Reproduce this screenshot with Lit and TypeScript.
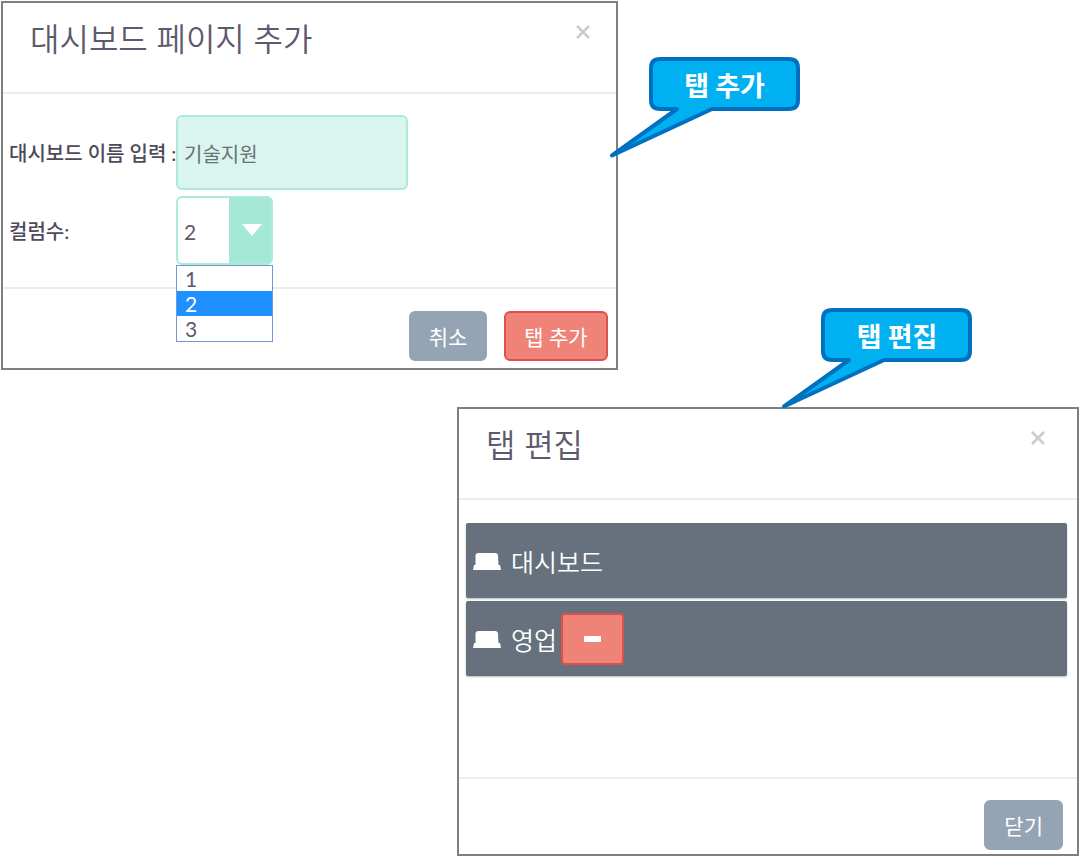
import { LitElement, html, css, svg } from "lit";
import { customElement, property, state } from "lit/decorators.js";
import { classMap } from "lit/directives/class-map.js";

@customElement("speech-callout")
export class SpeechCallout extends LitElement {
  @property() text = "";

  static styles = css`
    :host {
      display: grid;
      width: 190px;
      height: 101px;
    }
    .shape,
    .text {
      grid-area: 1 / 1;
    }
    .shape {
      display: block;
      overflow: visible;
    }
    .text {
      box-sizing: border-box;
      height: 54px;
      padding-left: 40px;
      text-align: center;
      color: #fff;
      font: 700 27px/56px "Noto Sans CJK KR", sans-serif;
    }
  `;

  render() {
    return html`
      <svg class="shape" width="190" height="101" viewBox="0 0 190 101" aria-hidden="true">
        <path
          d="M50 2H179Q188 2 188 11V43Q188 52 179 52H102L2 98.500L67 52H50Q41 52 41 43V11Q41 2 50 2Z"
          fill="#00b0f0"
          stroke="#0070c0"
          stroke-width="4"
          stroke-linejoin="round"
        />
      </svg>
      <span class="text">${this.text}</span>
    `;
  }
}

@customElement("modal-panel")
export class ModalPanel extends LitElement {
  @property() heading = "";

  static styles = css`
    :host {
      display: flex;
      flex-direction: column;
      position: relative;
      box-sizing: border-box;
      border: 2px solid #7f7f7f;
      background: #fff;
    }
    .header {
      display: flex;
      justify-content: space-between;
      align-items: flex-start;
      padding: 14px var(--header-end, 26px) 31px 27px;
      border-bottom: 2px solid #ececec;
    }
    .title {
      margin: 0;
      color: #5f596d;
      font-size: 32px;
      font-weight: 350;
      line-height: 44px;
    }
    .close {
      padding: 8px 0;
      border: 0;
      background: none;
      cursor: pointer;
    }
    .close svg {
      display: block;
    }
    .footer {
      display: flex;
      justify-content: flex-end;
      gap: 17px;
      padding: var(--footer-padding, 22px 8px 7px);
      border-top: 2px solid #ececec;
    }
  `;

  render() {
    return html`
      <header class="header">
        <h2 class="title">${this.heading}</h2>
        <button class="close" type="button" aria-label="닫기">
          <svg width="14" height="14" viewBox="0 0 14 14">
            <path d="M1 1L13 13M13 1L1 13" stroke="#ccc" stroke-width="2.600" />
          </svg>
        </button>
      </header>
      <slot></slot>
      <footer class="footer"><slot name="actions"></slot></footer>
    `;
  }
}

const hatIcon = svg`<svg class="hat" width="28" height="18" viewBox="0 0 28 18" aria-hidden="true">
  <path d="M2.500 13V4Q2.500 1 5.500 1H22Q25 1 25 4L25.500 13H27L28 18H0L1 13Z" fill="#fff" />
</svg>`;

@customElement("app-root")
export class AppRoot extends LitElement {
  @state() private columns = "2";
  @state() private tabs = [
    { name: "대시보드", removable: false },
    { name: "영업", removable: true },
  ];

  static styles = css`
    :host {
      display: flex;
      flex-direction: column;
      gap: 37px;
      box-sizing: border-box;
      padding: 1px;
      background: #fff;
      color: #5f586c;
      font-family: Lato, "Noto Sans CJK KR", sans-serif;
      font-size: 20px;
    }
    .add {
      width: 57.2%;
    }
    .edit {
      width: 57.7%;
      align-self: flex-end;
      --header-end: 32px;
      --footer-padding: 21px 14px 4px;
    }
    .add-note,
    .edit-note {
      position: absolute;
    }
    .add-note {
      top: 54px;
      left: calc(100% - 6px);
    }
    .edit-note {
      top: -101px;
      left: 323px;
    }
    .form {
      display: grid;
      grid-template-columns: 167px 1fr;
      align-items: center;
      row-gap: 6px;
      padding: 21px 6px 22px;
    }
    .label {
      color: #4f495c;
      font-weight: 500;
      white-space: nowrap;
    }
    .name {
      box-sizing: border-box;
      width: 232px;
      height: 75px;
      padding: 2px 6px 0;
      border: 2px solid #aeead9;
      border-radius: 6px;
      background: #d9f5ed;
      color: #69707a;
      font: inherit;
      outline: none;
    }
    .picker {
      position: relative;
      width: 97px;
    }
    .select {
      display: block;
      box-sizing: border-box;
      width: 100%;
      height: 69px;
      padding: 2px 6px 0;
      border: 2px solid #aeead9;
      border-radius: 6px;
      appearance: none;
      background: linear-gradient(#a6e8d6, #a6e8d6) right / 42px 100% no-repeat #fff;
      color: inherit;
      font: inherit;
      font-size: 21px;
      outline: none;
    }
    .arrow {
      position: absolute;
      top: 28px;
      right: 11px;
      pointer-events: none;
    }
    .options {
      position: absolute;
      z-index: 1;
      top: 100%;
      left: 0;
      right: 0;
      margin: 0;
      padding: 0;
      border: 1px solid #7398d8;
      background: #fff;
      list-style: none;
      font-size: 21px;
      line-height: 25px;
    }
    .option {
      padding-left: 8px;
      cursor: default;
    }
    .option.selected {
      background: #1e90ff;
      color: #fff;
    }
    .button {
      box-sizing: border-box;
      height: 50px;
      padding: 0 18px;
      border: 2px solid #94a4b4;
      border-radius: 6px;
      background: #94a4b4;
      color: #fff;
      font: inherit;
      font-size: 21px;
      cursor: pointer;
    }
    .button.danger,
    .remove {
      border-color: #dc514b;
      background: #f08377;
    }
    .tabs {
      display: flex;
      flex-direction: column;
      gap: 3px;
      min-height: 153px;
      margin: 0;
      padding: 23px 10px 101px 7px;
      list-style: none;
    }
    .tab {
      display: flex;
      align-items: center;
      box-sizing: border-box;
      height: 75px;
      padding-left: 7px;
      border-radius: 2px;
      background: #66717d;
      box-shadow: 0 1px 2px #b5bac0;
      color: #fff;
      font-size: 25px;
      font-weight: 350;
    }
    .tab-name {
      margin: 0 4px 0 10px;
    }
    .remove {
      display: grid;
      place-items: center;
      box-sizing: border-box;
      width: 63px;
      height: 52px;
      padding: 0;
      border: 2px solid #dc514b;
      border-radius: 4px;
      cursor: pointer;
    }
  `;

  private pick(e: Event) {
    this.columns = (e.target as HTMLSelectElement).value;
  }

  private remove(name: string) {
    this.tabs = this.tabs.filter((t) => t.name !== name);
  }

  render() {
    const choices = ["1", "2", "3"];
    return html`
      <modal-panel class="add" heading="대시보드 페이지 추가">
        <div class="form">
          <label class="label" for="name">대시보드 이름 입력 :</label>
          <input class="name" id="name" type="text" value="기술지원" />
          <label class="label" for="columns">컬럼수:</label>
          <div class="picker">
            <select class="select" id="columns" @change=${this.pick}>
              ${choices.map((c) => html`<option value=${c} ?selected=${c === this.columns}>${c}</option>`)}
            </select>
            <svg class="arrow" width="20" height="12" viewBox="0 0 20 12" aria-hidden="true">
              <path d="M0 0H20L10 12Z" fill="#fff" />
            </svg>
            <ul class="options" role="listbox" aria-label="컬럼수">
              ${choices.map(
                (c) => html`<li
                  class=${classMap({ option: true, selected: c === this.columns })}
                  role="option"
                  aria-selected=${c === this.columns ? "true" : "false"}
                  @click=${() => (this.columns = c)}
                >${c}</li>`
              )}
            </ul>
          </div>
        </div>
        <button class="button" slot="actions" type="button">취소</button>
        <button class="button danger" slot="actions" type="button">탭 추가</button>
        <speech-callout class="add-note" text="탭 추가"></speech-callout>
      </modal-panel>

      <modal-panel class="edit" heading="탭 편집">
        <ul class="tabs">
          ${this.tabs.map(
            (t) => html`<li class="tab">
              ${hatIcon}
              <span class="tab-name">${t.name}</span>
              ${t.removable
                ? html`<button class="remove" type="button" aria-label="${t.name} 삭제" @click=${() => this.remove(t.name)}>
                    <svg width="17" height="6" viewBox="0 0 17 6"><rect width="17" height="6" rx="1" fill="#fff" /></svg>
                  </button>`
                : ""}
            </li>`
          )}
        </ul>
        <button class="button" slot="actions" type="button">닫기</button>
        <speech-callout class="edit-note" text="탭 편집"></speech-callout>
      </modal-panel>
    `;
  }
}
